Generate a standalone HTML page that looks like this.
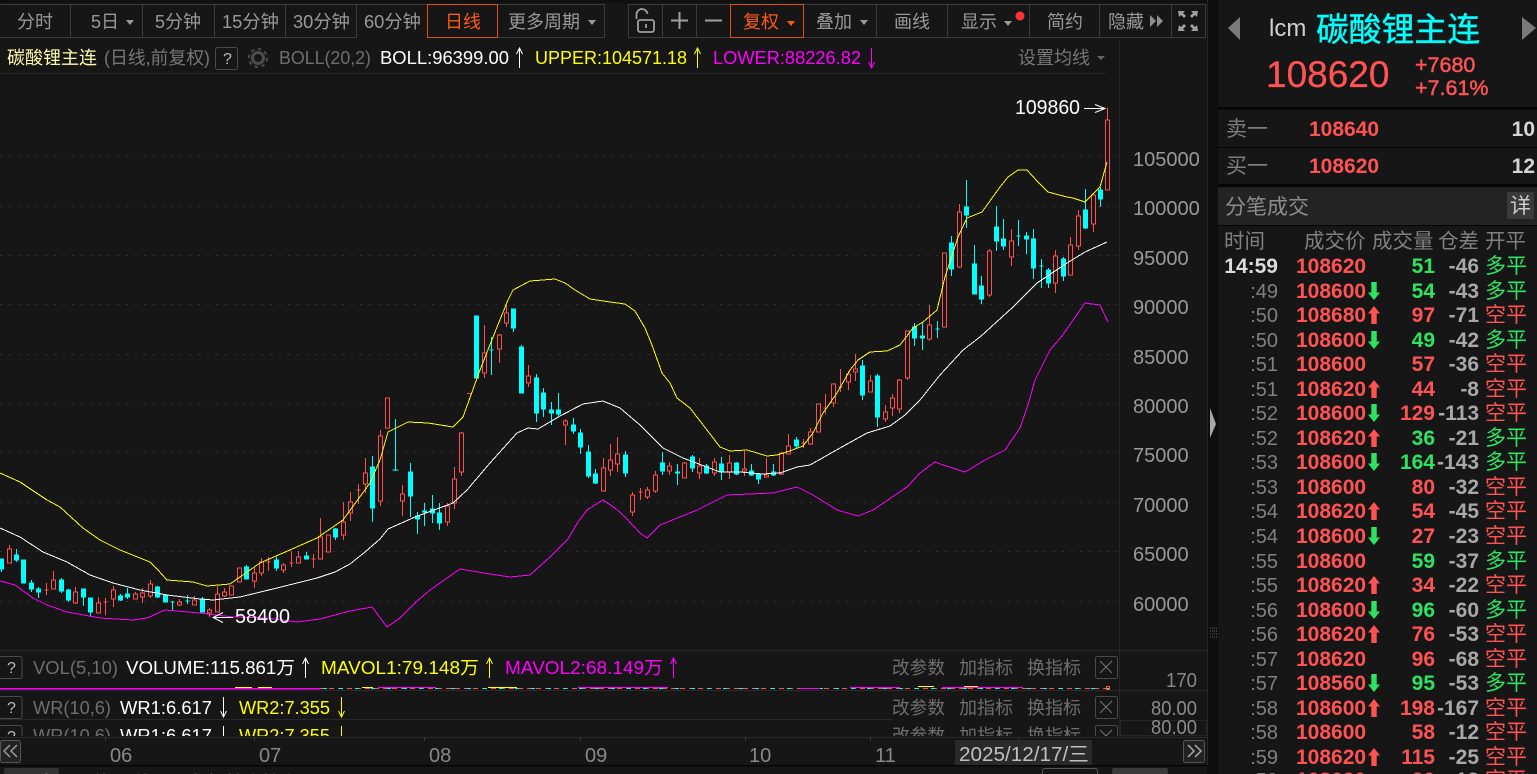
<!DOCTYPE html>
<html lang="zh"><head><meta charset="utf-8"><title>碳酸锂主连</title>
<style>
html,body{margin:0;padding:0;background:#161616;width:1537px;height:774px;overflow:hidden}
svg{display:block;position:absolute;left:0;top:0}
text{font-family:"Liberation Sans","Noto Sans CJK SC",sans-serif;white-space:pre}
.b{font-size:18px;fill:#999}
.h{font-size:18px}
.g{font-size:18px;fill:#6e6e6e}
.a{font-size:20px;fill:#999}
.t{font-size:20px;fill:#808080;text-anchor:end}
.p{font-size:21px;font-weight:bold;fill:#ff5353}
.vr{font-size:21px;font-weight:bold;fill:#ff5353;text-anchor:end}
.vg{font-size:21px;font-weight:bold;fill:#2fe362;text-anchor:end}
.d{font-size:21px;font-weight:bold;fill:#a8a8a8;text-anchor:end}
.kr{font-size:21px;fill:#ff5353}
.kg{font-size:21px;fill:#2fe362}
.hd{font-size:20.5px;fill:#808080}
</style></head><body>
<svg width="1537" height="774" viewBox="0 0 1537 774" xmlns="http://www.w3.org/2000/svg">
<defs>
<path id="au" d="M0 -9L6 -1.5H2.7V9H-2.7V-1.5H-6Z" fill="#ff5353"/>
<path id="ad" d="M0 9L6 1.5H2.7V-9H-2.7V1.5H-6Z" fill="#2fe362"/>
<clipPath id="wr2"><rect x="0" y="720" width="1207" height="16"/></clipPath>
<clipPath id="bot"><rect x="0" y="766" width="1207" height="8"/></clipPath>
<clipPath id="tbl"><rect x="1218" y="226" width="319" height="548"/></clipPath>
</defs>
<rect width="1537" height="774" fill="#161616"/>
<rect width="1207" height="3" fill="#101010"/>

<!-- top toolbar -->
<g fill="#181818" stroke="#3b3b3b">
<path d="M0.5 4.5H70.5V37.5H0.5M70.5 4.5H142.5V37.5H70.5M142.5 4.5H214.5V37.5H142.5M214.5 4.5H285.5V37.5H214.5M285.5 4.5H356.5V37.5H285.5M356.5 4.5H427.5V37.5M497.5 4.5H604.5V37.5H497.5" fill="none"/>
<path d="M628.5 4.5H662.5V37.5H628.5ZM662.5 4.5H696.5V37.5H662.5ZM696.5 4.5H730.5V37.5H696.5ZM803.5 4.5H876.5V37.5H803.5ZM876.5 4.5H947.5V37.5H876.5ZM947.5 4.5H1029.5V37.5H947.5ZM1029.5 4.5H1099.5V37.5H1029.5ZM1099.5 4.5H1171.5V37.5H1099.5ZM1171.5 4.5H1205.5V37.5H1171.5Z" fill="none"/>
</g>
<rect x="427.5" y="4.5" width="70" height="33" fill="none" stroke="#e0500f"/>
<rect x="730.5" y="4.5" width="73" height="33" fill="none" stroke="#e0500f"/>
<text class="b" x="17" y="28" textLength="36" lengthAdjust="spacingAndGlyphs">分时</text>
<text class="b" x="91" y="28" textLength="28" lengthAdjust="spacingAndGlyphs">5日</text>
<path d="M126 20h8l-4 5z" fill="#999"/>
<text class="b" x="155" y="28" textLength="46" lengthAdjust="spacingAndGlyphs">5分钟</text>
<text class="b" x="222" y="28" textLength="57" lengthAdjust="spacingAndGlyphs">15分钟</text>
<text class="b" x="293" y="28" textLength="57" lengthAdjust="spacingAndGlyphs">30分钟</text>
<text class="b" x="364" y="28" textLength="57" lengthAdjust="spacingAndGlyphs">60分钟</text>
<text class="b" x="445" y="28" textLength="36" lengthAdjust="spacingAndGlyphs" style="fill:#ff5a14">日线</text>
<text class="b" x="508" y="28" textLength="72" lengthAdjust="spacingAndGlyphs">更多周期</text>
<path d="M588 20h8l-4 5z" fill="#999"/>
<!-- lock -->
<g fill="none" stroke="#a0a0a0" stroke-width="1.8">
<rect x="638" y="20" width="16" height="12" rx="2"/>
<path d="M636.5 19v-4a5.5 5.5 0 0 1 11 -1"/>
<path d="M646 24v4"/>
</g>
<path d="M671 20.5h17M679.5 12v17" stroke="#a0a0a0" stroke-width="2" fill="none"/>
<path d="M705 20.5h17" stroke="#a0a0a0" stroke-width="2" fill="none"/>
<text class="b" x="743" y="28" textLength="36" lengthAdjust="spacingAndGlyphs" style="fill:#ff5a14">复权</text>
<path d="M787 21h8l-4 5z" fill="#ff5a14"/>
<text class="b" x="816" y="28" textLength="36" lengthAdjust="spacingAndGlyphs">叠加</text>
<path d="M860 20h8l-4 5z" fill="#999"/>
<text class="b" x="894" y="28" textLength="36" lengthAdjust="spacingAndGlyphs">画线</text>
<text class="b" x="961" y="28" textLength="36" lengthAdjust="spacingAndGlyphs">显示</text>
<path d="M1004 21h8l-4 5z" fill="#999"/>
<circle cx="1020" cy="16" r="4.5" fill="#ff3333"/>
<text class="b" x="1047" y="28" textLength="36" lengthAdjust="spacingAndGlyphs">简约</text>
<text class="b" x="1108" y="28" textLength="36" lengthAdjust="spacingAndGlyphs">隐藏</text>
<path d="M1150 15l6 6l-6 6zM1157 15l6 6l-6 6z" fill="#8f8f8f"/>
<g fill="#a0a0a0">
<path d="M1178 11h7l-2 2l3 3l-2 2l-3 -3l-2 2zM1198 11h-7l2 2l-3 3l2 2l3 -3l2 2zM1178 31h7l-2 -2l3 -3l-2 -2l-3 3l-2 -2zM1198 31h-7l2 -2l-3 -3l2 -2l3 3l2 -2z"/>
</g>

<!-- header row -->
<text class="h" x="7" y="64" textLength="90" lengthAdjust="spacingAndGlyphs" style="fill:#fffca8">碳酸锂主连</text>
<text class="g" x="104" y="64" textLength="106" lengthAdjust="spacingAndGlyphs" style="fill:#777">(日线,前复权)</text>
<rect x="215.5" y="47.5" width="22" height="22" rx="2" fill="none" stroke="#4a4a4a"/>
<text class="h" x="223" y="64" style="fill:#bbb;font-size:16px">?</text>
<circle cx="258" cy="58" r="5.5" fill="none" stroke="#4d4d4d" stroke-width="3"/>
<circle cx="258" cy="58" r="9" fill="none" stroke="#4d4d4d" stroke-width="2" stroke-dasharray="3.5 3.5"/>
<text class="g" x="279" y="64" textLength="92" lengthAdjust="spacingAndGlyphs">BOLL(20,2)</text>
<text class="h" x="380" y="64" textLength="129" lengthAdjust="spacingAndGlyphs" style="fill:#fff">BOLL:96399.00</text>
<path d="M519.5 68V48M516.5 54L519.5 48L522.5 54" fill="none" stroke="#fff"/>
<text class="h" x="535" y="64" textLength="152" lengthAdjust="spacingAndGlyphs" style="fill:#ffff00">UPPER:104571.18</text>
<path d="M697.5 68V48M694.5 54L697.5 48L700.5 54" fill="none" stroke="#ffff00"/>
<text class="h" x="713" y="64" textLength="148" lengthAdjust="spacingAndGlyphs" style="fill:#ff00ff">LOWER:88226.82</text>
<path d="M871.5 48V68M868.5 62L871.5 68L874.5 62" fill="none" stroke="#ff00ff"/>
<text class="g" x="1018" y="64" textLength="72" lengthAdjust="spacingAndGlyphs" style="fill:#777">设置均线</text>
<path d="M1097 56h8l-4 4z" fill="#666"/>
<path d="M0 73.5H1106" stroke="#262626"/>
<path d="M1119.5 40V736" stroke="#262626"/>

<!-- grid -->
<g stroke="#313131" stroke-dasharray="2 7" fill="none">
<path d="M0 156.5H1118M0 206.5H1118M0 255.5H1118M0 304.5H1118M0 354.5H1118M0 403.5H1118M0 452.5H1118M0 502.5H1118M0 551.5H1118M0 601.5H1118"/>
</g>

<!-- candles cyan -->
<path shape-rendering="crispEdges" fill="#00ffff" stroke="#00ffff" d="M1.5 559V572M-.5 559h4V569h-4zM16.5 549V562M14.5 555h4V560h-4zM21.5 560h4V583h-4zM31.5 580V592M29.5 583h4V589h-4zM38.5 587V598M36.5 589h4V592h-4zM61.5 578V593M59.5 580h4V591h-4zM68.5 589V602M66.5 590h4V600h-4zM83.5 589V606M81.5 589h4V597h-4zM90.5 598V616M88.5 598h4V612h-4zM120.5 594V601M118.5 596h4V600h-4zM127.5 588V599M125.5 594h4V597h-4zM157.5 586V598M155.5 587h4V597h-4zM165.5 594V602M163.5 595h4V602h-4zM172.5 601V611M170.5 602h4M187.5 595V604M185.5 601h4M202.5 597V612M200.5 599h4V612h-4zM246.5 565V579M244.5 567h4V579h-4zM276.5 557V571M274.5 560h4V568h-4zM306.5 552V559M304.5 556h4V559h-4zM335.5 528V540M333.5 529h4V537h-4zM372.5 456V522M370.5 467h4V508h-4zM395.5 419V471M392.5 470h6M410.5 463V517M408.5 472h4V496h-4zM417.5 512V534M415.5 516h4V519h-4zM424.5 503V526M422.5 511h4V512h-4zM432.5 495V523M430.5 509h4V513h-4zM439.5 503V530M437.5 513h4V523h-4zM474.5 316h4V378h-4zM491.5 337V375M489.5 350h4M513.5 309V332M511.5 309h4V328h-4zM521.5 345V393M519.5 347h4V393h-4zM536.5 374V422M534.5 378h4V413h-4zM543.5 388V417M541.5 393h4V409h-4zM551.5 402V425M549.5 410h4V413h-4zM558.5 393V416M556.5 410h4V414h-4zM573.5 418V434M571.5 425h4V431h-4zM580.5 429V454M578.5 433h4V447h-4zM588.5 445V478M586.5 452h4V476h-4zM595.5 469V484M593.5 474h4V483h-4zM625.5 451V477M623.5 455h4V473h-4zM662.5 452V475M660.5 463h4V471h-4zM677.5 464V485M675.5 472h4V473h-4zM692.5 455V472M690.5 457h4V468h-4zM706.5 464V474M704.5 466h4V473h-4zM721.5 457V480M719.5 464h4V472h-4zM736.5 462V475M734.5 463h4V474h-4zM751.5 464V476M749.5 471h4V475h-4zM758.5 473V484M756.5 474h4V479h-4zM773.5 464V476M771.5 472h4V475h-4zM796.5 437V449M794.5 440h4V446h-4zM862.5 360V400M860.5 366h4V395h-4zM877.5 374V427M875.5 376h4V417h-4zM914.5 323V346M912.5 327h4V338h-4zM922.5 322V350M920.5 336h4V338h-4zM937.5 321V338M935.5 329h4M951.5 236V276M949.5 243h4V269h-4zM966.5 180V228M964.5 207h4V215h-4zM974.5 245V294M972.5 264h4V294h-4zM981.5 276V304M979.5 286h4V299h-4zM996.5 206V251M994.5 227h4V241h-4zM1003.5 219V250M1001.5 239h4V246h-4zM1018.5 220V246M1016.5 236h4M1026.5 232V254M1024.5 236h4V239h-4zM1033.5 229V279M1031.5 239h4V268h-4zM1041.5 259V288M1039.5 266h4M1048.5 268V288M1046.5 270h4V283h-4zM1063.5 257V281M1061.5 259h4V276h-4zM1085.5 189V229M1083.5 210h4V228h-4zM1100.5 187V207M1098.5 190h4V199h-4z"/>

<!-- candles red -->
<path shape-rendering="crispEdges" fill="#161616" stroke="#ff4f4f" d="M9.5 545V549M7.5 549h4V563h-4zM46.5 583V595M44.5 590h4M53.5 571V580M51.5 580h4V589h-4zM75.5 587V592M75.5 603V604M73.5 592h4V603h-4zM98.5 597V603M96.5 603h4V613h-4zM105.5 598V615M103.5 602h4M113.5 586V590M113.5 599V607M111.5 590h4V599h-4zM135.5 592V594M133.5 594h4V599h-4zM142.5 588V593M142.5 597V603M140.5 593h4V597h-4zM150.5 580V584M150.5 596V598M148.5 584h4V596h-4zM179.5 599V602M179.5 605V606M177.5 602h4V605h-4zM194.5 596V600M192.5 600h4V605h-4zM209.5 608V610M209.5 613V617M207.5 610h4V613h-4zM217.5 586V594M215.5 594h4V612h-4zM224.5 588V592M224.5 596V597M222.5 592h4V596h-4zM229.5 586h4V595h-4zM237.5 568h4V582h-4zM254.5 568V573M254.5 581V588M252.5 573h4V581h-4zM261.5 558V562M261.5 573V576M259.5 562h4V573h-4zM268.5 557V571M266.5 562h4M283.5 563V565M283.5 570V573M281.5 565h4V570h-4zM291.5 551V567M289.5 563h4M298.5 551V557M296.5 557h4V563h-4zM313.5 554V568M311.5 559h4M320.5 518V537M318.5 537h4V559h-4zM326.5 535h4V552h-4zM343.5 502V522M343.5 535V540M341.5 522h4V535h-4zM350.5 492V502M350.5 513V521M348.5 502h4V513h-4zM358.5 484V504M356.5 490h4M365.5 458V473M365.5 484V493M363.5 473h4V484h-4zM380.5 430V436M380.5 501V506M378.5 436h4V501h-4zM385.5 398h4V428h-4zM402.5 485V494M402.5 501V516M400.5 494h4V501h-4zM447.5 503V506M447.5 522V526M445.5 506h4V522h-4zM454.5 467V479M454.5 503V509M452.5 479h4V503h-4zM461.5 432V433M461.5 472V476M459.5 433h4V472h-4zM467 393.5h5M484.5 325V353M484.5 373V378M482.5 353h4V373h-4zM499.5 334V335M499.5 349V363M497.5 335h4V349h-4zM506.5 305V313M506.5 323V327M504.5 313h4V323h-4zM528.5 365V376M528.5 383V387M526.5 376h4V383h-4zM565.5 419V421M565.5 425V445M563.5 421h4V425h-4zM603.5 458V468M601.5 468h4V491h-4zM610.5 444V460M610.5 470V476M608.5 460h4V470h-4zM617.5 437V454M617.5 464V472M615.5 454h4V464h-4zM632.5 492V495M632.5 512V516M630.5 495h4V512h-4zM640.5 488V500M638.5 492h4M647.5 487V490M647.5 497V499M645.5 490h4V497h-4zM655.5 471V475M655.5 491V493M653.5 475h4V491h-4zM669.5 462V466M669.5 471V475M667.5 466h4V471h-4zM684.5 462V463M682.5 463h4V478h-4zM699.5 458V466M699.5 473V479M697.5 466h4V473h-4zM714.5 458V462M714.5 473V476M712.5 462h4V473h-4zM729.5 455V463M729.5 472V479M727.5 463h4V472h-4zM744.5 451V469M744.5 471V476M742.5 469h4V471h-4zM766.5 458V475M764.5 475h4V477h-4zM781.5 452V453M781.5 474V475M779.5 453h4V474h-4zM788.5 434V446M786.5 446h4V454h-4zM803.5 439V448M801.5 443h4M810.5 428V432M810.5 444V445M808.5 432h4V444h-4zM816.5 404h4V432h-4zM825.5 394V414M823.5 408h4M833.5 383V384M833.5 403V407M831.5 384h4V403h-4zM840.5 369V392M838.5 387h4M848.5 371V374M848.5 382V390M846.5 374h4V382h-4zM855.5 354V369M855.5 372V381M853.5 369h4V372h-4zM870.5 375V381M868.5 381h4V392h-4zM885.5 405V412M885.5 419V422M883.5 412h4V419h-4zM892.5 394V398M892.5 408V416M890.5 398h4V408h-4zM899.5 379V380M899.5 409V413M897.5 380h4V409h-4zM907.5 378V380M905.5 331h4V378h-4zM929.5 305V325M929.5 339V341M927.5 325h4V339h-4zM942.5 253h4V327h-4zM959.5 204V212M959.5 267V268M957.5 212h4V267h-4zM989.5 249V251M989.5 295V297M987.5 251h4V295h-4zM1011.5 229V241M1011.5 257V266M1009.5 241h4V257h-4zM1055.5 250V256M1055.5 283V293M1053.5 256h4V283h-4zM1070.5 237V245M1068.5 245h4V275h-4zM1078.5 210V216M1078.5 246V250M1076.5 216h4V246h-4zM1093.5 194V195M1093.5 224V232M1091.5 195h4V224h-4zM1107.5 108V120M1105.5 120h4V190h-4z"/>

<!-- BOLL lines -->
<g fill="none" stroke-width="1" stroke-linejoin="round" shape-rendering="crispEdges">
<polyline stroke="#ffff00" points="0,473 20,482 35,492 47,500 60,507 83,528 100,540 120,550 150,562 158,570 167,580 193,582 207,586 230,584 260,563 283,553 317,538 343,520 370,483 380,460 388,432 408,422 428,423 453,427 463,417 480,370 497,327 508,300 513,290 530,281 555,279 565,283 575,290 590,299 610,302 625,304 635,311 645,328 652,345 662,373 670,383 677,398 690,408 707,430 720,447 730,451 747,450 767,456 777,455 787,452 803,446 813,433 823,413 837,393 850,370 858,360 870,352 887,351 900,345 913,328 923,322 937,310 945,277 958,237 967,218 982,212 1000,187 1008,177 1018,170 1027,170 1038,182 1048,192 1067,197 1073,198 1085,202 1100,187 1107,162"/>
<polyline stroke="#ffffff" points="0,528 20,537 43,552 67,562 90,575 113,583 140,590 167,595 200,599 213,600 240,597 277,588 317,578 335,572 350,564 365,552 380,539 388,529 415,517 453,503 467,490 490,463 517,433 528,428 538,429 560,416 583,404 603,401 620,408 640,425 663,448 683,458 720,472 740,472 763,474 780,473 797,467 810,465 840,448 867,433 890,426 905,415 920,400 940,375 963,350 980,337 1013,307 1037,283 1067,263 1085,252 1107,242"/>
<polyline stroke="#ff00ff" points="0,581 15,585 33,598 47,605 67,612 100,618 133,620 147,618 165,610 200,613 233,617 267,618 297,622 320,619 350,611 372,607 387,627 400,618 415,603 430,590 460,569 490,574 510,577 530,575 550,557 568,539 578,522 587,510 603,500 615,508 625,517 640,533 647,538 660,525 680,517 697,510 727,495 773,493 797,487 813,495 837,510 858,516 873,510 907,487 920,473 935,462 943,465 965,472 985,460 1005,450 1020,428 1028,405 1035,380 1050,350 1062,336 1085,303 1100,305 1108,322"/>
</g>

<!-- max / min markers -->
<text class="a" x="1015" y="114" style="fill:#fff" textLength="65" lengthAdjust="spacingAndGlyphs">109860</text>
<path d="M1084 108.5H1105M1095 104.5L1105 108.5L1095 112.5" fill="none" stroke="#fff"/>
<text class="a" x="235" y="623" style="fill:#fff" textLength="55" lengthAdjust="spacingAndGlyphs">58400</text>
<path d="M233 617.5H213M223 612.5L213 617.5L223 622.5" fill="none" stroke="#fff"/>

<!-- y axis -->
<g class="a"><text class="a" x="1133" y="166">105000</text><text class="a" x="1133" y="215">100000</text><text class="a" x="1133" y="265">95000</text><text class="a" x="1133" y="314">90000</text><text class="a" x="1133" y="364">85000</text><text class="a" x="1133" y="413">80000</text><text class="a" x="1133" y="462">75000</text><text class="a" x="1133" y="512">70000</text><text class="a" x="1133" y="561">65000</text><text class="a" x="1133" y="611">60000</text></g>

<!-- separators -->
<path d="M0 650.5H1207M0 690.5H1207M0 719.5H892M0 737.5H1207" stroke="#282828" fill="none"/>
<rect x="1120.5" y="720.5" width="86" height="15" fill="none" stroke="#262626"/>

<!-- VOL row -->
<rect x="-1" y="656.5" width="23" height="22" rx="2" fill="none" stroke="#4a4a4a"/>
<text x="7" y="673" style="fill:#bbb;font-size:16px">?</text>
<text class="g" x="33" y="674" textLength="85" lengthAdjust="spacingAndGlyphs">VOL(5,10)</text>
<text class="h" x="126" y="674" textLength="169" lengthAdjust="spacingAndGlyphs" style="fill:#fff">VOLUME:115.861万</text>
<path d="M305.5 678V658M302.5 664L305.5 658L308.5 664" fill="none" stroke="#fff"/>
<text class="h" x="321" y="674" textLength="158" lengthAdjust="spacingAndGlyphs" style="fill:#ffff00">MAVOL1:79.148万</text>
<path d="M489.5 678V658M486.5 664L489.5 658L492.5 664" fill="none" stroke="#ffff00"/>
<text class="h" x="505" y="674" textLength="158" lengthAdjust="spacingAndGlyphs" style="fill:#ff00ff">MAVOL2:68.149万</text>
<path d="M673.5 678V658M670.5 664L673.5 658L676.5 664" fill="none" stroke="#ff00ff"/>
<text class="g" x="892" y="674" textLength="53" lengthAdjust="spacingAndGlyphs">改参数</text>
<text class="g" x="959" y="674" textLength="54" lengthAdjust="spacingAndGlyphs">加指标</text>
<text class="g" x="1027" y="674" textLength="54" lengthAdjust="spacingAndGlyphs">换指标</text>
<rect x="1095.5" y="656.5" width="22" height="22" rx="2" fill="none" stroke="#4a4a4a"/>
<path d="M1100 661l12 12M1112 661l-12 12" stroke="#777"/>
<text class="a" x="1166" y="687" style="fill:#888" textLength="31" lengthAdjust="spacingAndGlyphs">170</text>
<!-- volume bars -->
<g fill="none" shape-rendering="crispEdges">
<path d="M0 688.5H320" stroke="#ff00ff" stroke-width="1.5"/>
<path d="M320 688.5H1110" stroke="#ff5555" stroke-dasharray="5 4"/>
<path d="M323 688.5H1110" stroke="#00ffff" stroke-dasharray="4 12"/>
<path d="M378 687.5H436M578 687.5H668M850 687.5H900M942 687.5H1023M800 688.5H820" stroke="#ff00ff"/>
<path d="M235 687.5H252M258 687.5H272M362 687.5H373M488 687.5H517M918 686.5H934M964 686.5H978" stroke="#ffff00"/>
<rect x="1106.5" y="686.5" width="3" height="3" stroke="#ff5555"/>
</g>

<!-- WR row 1 -->
<rect x="-1" y="696.5" width="23" height="22" rx="2" fill="none" stroke="#4a4a4a"/>
<text x="7" y="713" style="fill:#bbb;font-size:16px">?</text>
<text class="g" x="33" y="714" textLength="78" lengthAdjust="spacingAndGlyphs">WR(10,6)</text>
<text class="h" x="120" y="714" textLength="92" lengthAdjust="spacingAndGlyphs" style="fill:#fff">WR1:6.617</text>
<path d="M223.5 697V717M220.5 711L223.5 717L226.5 711" fill="none" stroke="#fff"/>
<text class="h" x="239" y="714" textLength="91" lengthAdjust="spacingAndGlyphs" style="fill:#ffff00">WR2:7.355</text>
<path d="M341.5 697V717M338.5 711L341.5 717L344.5 711" fill="none" stroke="#ffff00"/>
<text class="g" x="892" y="714" textLength="53" lengthAdjust="spacingAndGlyphs">改参数</text>
<text class="g" x="959" y="714" textLength="54" lengthAdjust="spacingAndGlyphs">加指标</text>
<text class="g" x="1027" y="714" textLength="54" lengthAdjust="spacingAndGlyphs">换指标</text>
<rect x="1095.5" y="696.5" width="22" height="22" rx="2" fill="none" stroke="#4a4a4a"/>
<path d="M1100 701l12 12M1112 701l-12 12" stroke="#777"/>
<text class="a" x="1151" y="715" style="fill:#8c8c8c" textLength="46" lengthAdjust="spacingAndGlyphs">80.00</text>
<text class="a" x="1151" y="734" style="fill:#8c8c8c" textLength="46" lengthAdjust="spacingAndGlyphs">80.00</text>

<!-- WR row 2 clipped -->
<g clip-path="url(#wr2)">
<rect x="-1" y="725.5" width="23" height="22" rx="2" fill="none" stroke="#4a4a4a"/>
<text x="7" y="742" style="fill:#bbb;font-size:16px">?</text>
<text class="g" x="33" y="742" textLength="78" lengthAdjust="spacingAndGlyphs">WR(10,6)</text>
<text class="h" x="120" y="742" textLength="92" lengthAdjust="spacingAndGlyphs" style="fill:#fff">WR1:6.617</text>
<path d="M223.5 726V746" fill="none" stroke="#fff"/>
<text class="h" x="239" y="742" textLength="91" lengthAdjust="spacingAndGlyphs" style="fill:#ffff00">WR2:7.355</text>
<path d="M341.5 726V746" fill="none" stroke="#ffff00"/>
<text class="g" x="892" y="742" textLength="53" lengthAdjust="spacingAndGlyphs">改参数</text>
<text class="g" x="959" y="742" textLength="54" lengthAdjust="spacingAndGlyphs">加指标</text>
<text class="g" x="1027" y="742" textLength="54" lengthAdjust="spacingAndGlyphs">换指标</text>
<rect x="1095.5" y="725.5" width="22" height="22" rx="2" fill="none" stroke="#4a4a4a"/>
<path d="M1100 730l12 12M1112 730l-12 12" stroke="#777"/>
</g>

<!-- x axis -->
<path d="M105.5 737V741M254.5 737V741M424.5 737V741M580.5 737V741M745.5 737V741M870.5 737V741M1018.5 737V741" stroke="#3a3a3a"/>
<rect x="0.5" y="740.5" width="20" height="22" rx="2" fill="#222" stroke="#555"/>
<path d="M10 745l-6 6l6 6M17 745l-6 6l6 6" fill="none" stroke="#999" stroke-width="1.5"/>
<text class="a" x="110" y="762" style="fill:#888">06</text>
<text class="a" x="259" y="762" style="fill:#888">07</text>
<text class="a" x="429" y="762" style="fill:#888">08</text>
<text class="a" x="585" y="762" style="fill:#888">09</text>
<text class="a" x="749" y="762" style="fill:#888">10</text>
<text class="a" x="875" y="762" style="fill:#888">11</text>
<rect x="955" y="740" width="137" height="25" fill="#2a2a2a"/>
<text class="a" x="959" y="761" style="fill:#c0c0c0" textLength="130" lengthAdjust="spacingAndGlyphs">2025/12/17/三</text>
<rect x="1183.5" y="740.5" width="21" height="22" rx="2" fill="#222" stroke="#555"/>
<path d="M1188 745l6 6l-6 6M1195 745l6 6l-6 6" fill="none" stroke="#aaa" stroke-width="1.5"/>

<!-- bottom strip -->
<rect x="0" y="765" width="1207" height="1.5" fill="#050505"/>
<rect x="4" y="768" width="55" height="6" rx="2" fill="#333"/>
<rect x="1042.5" y="768.5" width="55" height="8" rx="2" fill="none" stroke="#555"/>
<rect x="1112" y="768" width="56" height="6" rx="2" fill="#3a3a3a"/>
<g clip-path="url(#bot)">
<text x="14" y="789" style="font-size:18px;fill:#ddd">分时</text>
<text x="75" y="789" style="font-size:18px;fill:#888">日线 周线</text>
<text x="185" y="789" style="font-size:18px;fill:#888">成交 持仓</text>
<text x="262" y="789" style="font-size:18px;fill:#888">持仓</text>
</g>

<!-- right divider -->
<rect x="1207" y="0" width="11" height="774" fill="#0e0e0e"/>
<path d="M1207.5 0V765" stroke="#262626"/>
<path d="M1210 408L1216 424L1210 438Z" fill="#a8a8a8"/>
<path d="M1210 628h7M1210 631h7M1210 634h7M1210 637h7" stroke="#666" stroke-dasharray="1 1"/>

<!-- right panel -->
<rect x="1218" y="0" width="319" height="774" fill="#161616"/>
<path d="M1228 28L1240 17V40Z" fill="#7a7a7a"/>
<path d="M1536 28L1522 17V40Z" fill="#7a7a7a"/>
<text x="1269" y="36" style="font-size:24px;fill:#d0d0d0">lcm</text>
<text x="1316" y="41" textLength="164" lengthAdjust="spacingAndGlyphs" style="font-size:33px;fill:#00ffff;stroke:#00ffff;stroke-width:.4">碳酸锂主连</text>
<text x="1266" y="87" style="font-size:37px;fill:#ff5353;stroke:#ff5353;stroke-width:.3">108620</text>
<text x="1415" y="72" style="font-size:21.5px;fill:#ff5353;stroke:#ff5353;stroke-width:.5">+7680</text>
<text x="1415" y="95" style="font-size:21.5px;fill:#ff5353;stroke:#ff5353;stroke-width:.5">+7.61%</text>
<rect x="1218" y="107" width="319" height="2.5" fill="#060606"/>
<text x="1226" y="136" style="font-size:21px;fill:#7d7d7d">卖一</text>
<text class="p" x="1309" y="136">108640</text>
<text x="1535" y="136" text-anchor="end" style="font-size:21px;font-weight:bold;fill:#d5d5d5">10</text>
<rect x="1218" y="147" width="319" height="1" fill="#060606"/>
<text x="1226" y="173" style="font-size:21px;fill:#7d7d7d">买一</text>
<text class="p" x="1309" y="173">108620</text>
<text x="1535" y="173" text-anchor="end" style="font-size:21px;font-weight:bold;fill:#d5d5d5">12</text>
<rect x="1218" y="184" width="319" height="3" fill="#060606"/>
<rect x="1218" y="187" width="319" height="38" fill="#232323"/>
<text x="1225" y="214" style="font-size:21px;fill:#8c8c8c">分笔成交</text>
<rect x="1507" y="192" width="27" height="27" fill="#3a3a3a"/>
<text x="1510" y="213" style="font-size:21px;fill:#ccc">详</text>
<path d="M1218 225.5H1537" stroke="#060606"/>
<text class="hd" x="1224" y="248">时间</text>
<text class="hd" x="1304" y="248">成交价</text>
<text class="hd" x="1372" y="248">成交量</text>
<text class="hd" x="1438" y="248">仓差</text>
<text class="hd" x="1485" y="248">开平</text>

<g clip-path="url(#tbl)">
<text x="1278" y="273" text-anchor="end" style="font-size:21px;font-weight:bold;fill:#dcdcdc">14:59</text><text class="p" x="1296" y="273">108620</text><text class="vg" x="1435" y="273">51</text><text class="d" x="1479" y="273">-46</text><text class="kg" x="1485" y="273">多平</text>
<text class="t" x="1278" y="298">:49</text><text class="p" x="1296" y="298">108600</text><use href="#ad" x="1374" y="291"/><text class="vg" x="1435" y="298">54</text><text class="d" x="1479" y="298">-43</text><text class="kg" x="1485" y="298">多平</text>
<text class="t" x="1278" y="322">:50</text><text class="p" x="1296" y="322">108680</text><use href="#au" x="1374" y="315"/><text class="vr" x="1435" y="322">97</text><text class="d" x="1479" y="322">-71</text><text class="kr" x="1485" y="322">空平</text>
<text class="t" x="1278" y="347">:50</text><text class="p" x="1296" y="347">108600</text><use href="#ad" x="1374" y="340"/><text class="vg" x="1435" y="347">49</text><text class="d" x="1479" y="347">-42</text><text class="kg" x="1485" y="347">多平</text>
<text class="t" x="1278" y="371">:51</text><text class="p" x="1296" y="371">108600</text><text class="vr" x="1435" y="371">57</text><text class="d" x="1479" y="371">-36</text><text class="kr" x="1485" y="371">空平</text>
<text class="t" x="1278" y="396">:51</text><text class="p" x="1296" y="396">108620</text><use href="#au" x="1374" y="389"/><text class="vr" x="1435" y="396">44</text><text class="d" x="1479" y="396">-8</text><text class="kr" x="1485" y="396">空平</text>
<text class="t" x="1278" y="420">:52</text><text class="p" x="1296" y="420">108600</text><use href="#ad" x="1374" y="413"/><text class="vr" x="1435" y="420">129</text><text class="d" x="1479" y="420">-113</text><text class="kr" x="1485" y="420">空平</text>
<text class="t" x="1278" y="445">:52</text><text class="p" x="1296" y="445">108620</text><use href="#au" x="1374" y="438"/><text class="vg" x="1435" y="445">36</text><text class="d" x="1479" y="445">-21</text><text class="kg" x="1485" y="445">多平</text>
<text class="t" x="1278" y="469">:53</text><text class="p" x="1296" y="469">108600</text><use href="#ad" x="1374" y="462"/><text class="vg" x="1435" y="469">164</text><text class="d" x="1479" y="469">-143</text><text class="kg" x="1485" y="469">多平</text>
<text class="t" x="1278" y="494">:53</text><text class="p" x="1296" y="494">108600</text><text class="vr" x="1435" y="494">80</text><text class="d" x="1479" y="494">-32</text><text class="kr" x="1485" y="494">空平</text>
<text class="t" x="1278" y="518">:54</text><text class="p" x="1296" y="518">108620</text><use href="#au" x="1374" y="511"/><text class="vr" x="1435" y="518">54</text><text class="d" x="1479" y="518">-45</text><text class="kr" x="1485" y="518">空平</text>
<text class="t" x="1278" y="543">:54</text><text class="p" x="1296" y="543">108600</text><use href="#ad" x="1374" y="536"/><text class="vr" x="1435" y="543">27</text><text class="d" x="1479" y="543">-23</text><text class="kr" x="1485" y="543">空平</text>
<text class="t" x="1278" y="568">:55</text><text class="p" x="1296" y="568">108600</text><text class="vg" x="1435" y="568">59</text><text class="d" x="1479" y="568">-37</text><text class="kg" x="1485" y="568">多平</text>
<text class="t" x="1278" y="592">:55</text><text class="p" x="1296" y="592">108620</text><use href="#au" x="1374" y="585"/><text class="vr" x="1435" y="592">34</text><text class="d" x="1479" y="592">-22</text><text class="kr" x="1485" y="592">空平</text>
<text class="t" x="1278" y="617">:56</text><text class="p" x="1296" y="617">108600</text><use href="#ad" x="1374" y="610"/><text class="vg" x="1435" y="617">96</text><text class="d" x="1479" y="617">-60</text><text class="kg" x="1485" y="617">多平</text>
<text class="t" x="1278" y="641">:56</text><text class="p" x="1296" y="641">108620</text><use href="#au" x="1374" y="634"/><text class="vr" x="1435" y="641">76</text><text class="d" x="1479" y="641">-53</text><text class="kr" x="1485" y="641">空平</text>
<text class="t" x="1278" y="666">:57</text><text class="p" x="1296" y="666">108620</text><text class="vr" x="1435" y="666">96</text><text class="d" x="1479" y="666">-68</text><text class="kr" x="1485" y="666">空平</text>
<text class="t" x="1278" y="690">:57</text><text class="p" x="1296" y="690">108560</text><use href="#ad" x="1374" y="683"/><text class="vg" x="1435" y="690">95</text><text class="d" x="1479" y="690">-53</text><text class="kg" x="1485" y="690">多平</text>
<text class="t" x="1278" y="715">:58</text><text class="p" x="1296" y="715">108600</text><use href="#au" x="1374" y="708"/><text class="vr" x="1435" y="715">198</text><text class="d" x="1479" y="715">-167</text><text class="kr" x="1485" y="715">空平</text>
<text class="t" x="1278" y="739">:58</text><text class="p" x="1296" y="739">108600</text><text class="vr" x="1435" y="739">58</text><text class="d" x="1479" y="739">-12</text><text class="kr" x="1485" y="739">空平</text>
<text class="t" x="1278" y="764">:59</text><text class="p" x="1296" y="764">108620</text><use href="#au" x="1374" y="757"/><text class="vr" x="1435" y="764">115</text><text class="d" x="1479" y="764">-25</text><text class="kr" x="1485" y="764">空平</text>
<text class="t" x="1278" y="787">:59</text><text class="p" x="1296" y="787">108620</text><text class="vr" x="1435" y="787">20</text><text class="d" x="1479" y="787">-13</text><text class="kr" x="1485" y="787">空平</text>
</g>
</svg>
</body></html>
